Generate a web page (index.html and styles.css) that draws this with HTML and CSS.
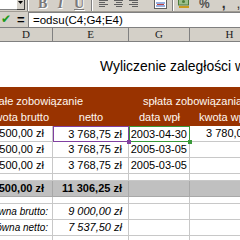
FILE: index.html
```html
<!DOCTYPE html>
<html>
<head>
<meta charset="utf-8">
<link rel="stylesheet" href="styles.css">
</head>
<body>
<div class="app">
  <div class="toolbar">
    <div class="combo"></div>
    <div class="dropbtn"><svg width="5" height="3" viewBox="0 0 5 3"><path d="M0 0h5L2.5 3z" fill="#000"/></svg></div>
    <div class="sep"></div>
    <div class="tb tb-b">B</div>
    <div class="tb tb-i">I</div>
    <div class="tb tb-u">U</div>
    <div class="sep sep2"></div>
    <div class="align"><i></i><i class="s"></i><i></i><i class="s"></i></div>
    <div class="align c"><i></i><i class="s"></i><i></i><i class="s"></i></div>
    <div class="align r"><i></i><i class="s"></i><i></i><i class="s"></i></div>
    <div class="merge"><svg width="13" height="9" viewBox="0 0 13 9"><rect x="0.5" y="-1" width="12" height="9.5" fill="#fff" stroke="#606060"/><path d="M2 3h9M2 6h9" stroke="#3060c0" stroke-width="1"/><path d="M3 4.5h7" stroke="#c04040"/></svg></div>
    <div class="sep sep3"></div>
    <div class="money"><svg width="12" height="9" viewBox="0 0 12 9"><rect x="0.5" y="-2" width="10" height="7" fill="#9cc08c" stroke="#4a7a3a"/><circle cx="5.5" cy="1.5" r="1.5" fill="#4a7a3a"/><path d="M1 7h10" stroke="#c89a20" stroke-width="2"/></svg></div>
    <div class="pct">%</div>
    <div class="comma">,</div>
    <div class="more">,</div>
  </div>
  <div class="formulabar">
    <div class="fb-left">
      <span class="check">✔</span>
      <span class="eq">=</span>
    </div>
    <div class="fb-input">=odsu(C4;G4;E4)</div>
  </div>
  <div class="colheads">
    <div class="ch cd">D</div>
    <div class="ch ce">E</div>
    <div class="ch cg">G</div>
    <div class="ch chh">H</div>
  </div>
  <div class="sheet">
    <div class="row r-blank1"></div>
    <div class="row r-title"><div class="title">Wyliczenie zaległości w</div></div>
    <div class="row r-blank2"></div>
    <div class="row r-h1 brown">
      <div class="c cd ra"><span>całe zobowiązanie</span></div>
      <div class="c ce"></div>
      <div class="c cg span">spłata zobowiązania</div>
    </div>
    <div class="row r-h2 brown">
      <div class="c cd ra pr4"><span>kwota brutto</span></div>
      <div class="c ce center">netto</div>
      <div class="c cg center">data wpł</div>
      <div class="c chh left2">kwota wpłaty</div>
    </div>
    <div class="row grid r-d">
      <div class="c cd ra num"><span>4 500,00 zł</span></div>
      <div class="c ce num sel-purple">3 768,75 zł<b class="handle hp"></b></div>
      <div class="c cg date sel-green">2003-04-30<b class="handle hg"></b></div>
      <div class="c chh num2">3 780,00 zł</div>
    </div>
    <div class="row grid r-d">
      <div class="c cd ra num"><span>4 500,00 zł</span></div>
      <div class="c ce num">3 768,75 zł</div>
      <div class="c cg date">2005-03-05</div>
      <div class="c chh"></div>
    </div>
    <div class="row grid r-d">
      <div class="c cd ra num"><span>4 500,00 zł</span></div>
      <div class="c ce num">3 768,75 zł</div>
      <div class="c cg date">2005-03-05</div>
      <div class="c chh"></div>
    </div>
    <div class="row grid r-blank3">
      <div class="c cd"></div><div class="c ce"></div><div class="c cg"></div><div class="c chh"></div>
    </div>
    <div class="row grid r-total">
      <div class="c cd ra num"><span>13 500,00 zł</span></div>
      <div class="c ce num">11 306,25 zł</div>
      <div class="c cg"></div>
      <div class="c chh"></div>
    </div>
    <div class="row grid r-blank4">
      <div class="c cd"></div><div class="c ce"></div><div class="c cg"></div><div class="c chh"></div>
    </div>
    <div class="row grid r-it">
      <div class="c cd ra lbl"><span>Kwota równa brutto:</span></div>
      <div class="c ce num">9 000,00 zł</div>
      <div class="c cg"></div>
      <div class="c chh"></div>
    </div>
    <div class="row grid r-it">
      <div class="c cd ra lbl"><span>Kwota równa netto:</span></div>
      <div class="c ce num">7 537,50 zł</div>
      <div class="c cg"></div>
      <div class="c chh"></div>
    </div>
    <div class="row grid r-it">
      <div class="c cd"></div><div class="c ce"></div><div class="c cg"></div><div class="c chh"></div>
    </div>
  </div>
</div>
</body>
</html>
```

FILE: styles.css
```css
html, body {
  margin: 0;
  padding: 0;
  background: #fff;
}
.app {
  width: 240px;
  height: 240px;
  overflow: hidden;
  font-family: "Liberation Sans", Arial, sans-serif;
}

/* toolbar */
.toolbar {
  height: 11px;
  background: #d4d0c8;
  display: flex;
  align-items: flex-start;
  overflow: hidden;
  border-bottom: 1px solid #a09c94;
}
.combo {
  width: 17px;
  height: 9px;
  background: #fff;
  border-bottom: 1px solid #808080;
  flex: none;
}
.dropbtn {
  width: 8px;
  background: #d4d0c8;
  border-right: 1px solid #404040;
  border-bottom: 1px solid #404040;
  display: flex;
  justify-content: center;
  align-items: flex-start;
  padding-top: 1px;
  box-sizing: border-box;
  height: 10px;
  flex: none;
}
.sep {
  width: 1px;
  height: 11px;
  background: #808080;
  border-right: 1px solid #fff;
  margin-left: 2px;
  flex: none;
}
.tb {
  font-family: "Liberation Serif", serif;
  font-weight: bold;
  font-size: 14px;
  line-height: 10px;
  margin-top: -1px;
  color: #7a7a7a;
  text-shadow: 1px 1px 0 #fff;
  width: 9px;
  text-align: center;
  flex: none;
}
.tb-b { margin-left: 9px; }
.tb-i { margin-left: 9px; font-style: italic; }
.tb-u { margin-left: 9px; text-decoration: underline; }
.sep2 { margin-left: 8px; }
.align {
  width: 9px;
  margin-left: 6px;
  display: flex;
  flex-direction: column;
  align-items: flex-start;
  gap: 1px;
  flex: none;
}
.align i {
  display: block;
  width: 9px;
  height: 1px;
  background: #606060;
}
.align i.s { width: 6px; }
.align.c { align-items: center; }
.align.r { align-items: flex-end; }
.merge { margin-left: 16px; flex: none; line-height: 0; }
.sep3 { margin-left: 5px; }
.money { margin-left: 4px; flex: none; line-height: 0; }
.pct {
  margin-left: 9px;
  font-size: 12px;
  line-height: 8px;
  color: #505050;
  font-weight: bold;
  flex: none;
}
.comma {
  margin-left: 12px;
  font-size: 14px;
  line-height: 6px;
  color: #303030;
  font-weight: bold;
  flex: none;
}
.more {
  margin-left: 11px;
  font-size: 14px;
  line-height: 6px;
  color: #303030;
  flex: none;
}

/* formula bar */
.formulabar {
  height: 15px;
  display: flex;
  background: #d4d0c8;
  border-bottom: 1px solid #808080;
}
.fb-left {
  width: 28px;
  display: flex;
  align-items: center;
  flex: none;
}
.check {
  color: #1a9a1a;
  font-size: 12px;
  line-height: 15px;
  margin-left: 1px;
  font-family: "DejaVu Sans", sans-serif;
}
.eq {
  font-size: 13px;
  font-weight: bold;
  margin-left: 6px;
  line-height: 15px;
}
.fb-input {
  flex: 1;
  background: #fff;
  border-top: 1px solid #808080;
  border-left: 1px solid #808080;
  font-size: 11.5px;
  line-height: 14px;
  padding-left: 4px;
  color: #000;
  white-space: nowrap;
}

/* column headers */
.colheads {
  height: 13px;
  display: flex;
  background: #d4d0c8;
  border-bottom: 1px solid #808080;
}
.ch {
  font-family: "Liberation Serif", serif;
  font-size: 11px;
  line-height: 13px;
  text-align: center;
  border-right: 1px solid #808080;
  box-sizing: border-box;
  color: #202020;
}
.cd { width: 53px; flex: none; }
.ce { width: 76px; flex: none; }
.cg { width: 61px; flex: none; }
.chh { width: 80px; flex: none; }

/* sheet */
.sheet {
  font-size: 11px;
}
.row {
  display: flex;
  white-space: nowrap;
}
.c {
  box-sizing: border-box;
  position: relative;
}
.ra {
  display: flex;
  justify-content: flex-end;
  overflow: hidden;
}
.ra span { flex: none; }
.r-blank1 { height: 13px; }
.r-title { height: 25px; }
.title {
  font-size: 13.9px;
  line-height: 16px;
  padding-top: 3px;
  padding-left: 100px;
  color: #000;
}
.r-blank2 { height: 7px; }
.brown {
  background: #993300;
  color: #fff8f0;
}
.r-h1 { height: 23px; align-items: flex-end; }
.r-h1 .c { line-height: 14px; padding-bottom: 2px; }
.r-h1 .cd { width: 83px; margin-right: -30px; }
.r-h2 { height: 16px; }
.r-h2 .c { line-height: 15px; }
.pr4 { padding-right: 4px; }
.span { padding-left: 14px; }
.center { text-align: center; }
.left2 { padding-left: 9px; }

.grid .c {
  border-right: 1px solid #c8c8c8;
  border-bottom: 1px solid #c8c8c8;
}
.r-d { height: 16px; }
.r-d .c { line-height: 15px; }
.num { text-align: right; padding-right: 6px; }
.cd.num { padding-right: 8px; }
.date { text-align: right; padding-right: 2px; }
.num2 { text-align: left; padding-left: 16px; }
.sel-purple {
  border: 1px solid #8040a0 !important;
}
.sel-green {
  border: 1px solid #3a9a3a !important;
}
.handle {
  position: absolute;
  width: 4px;
  height: 4px;
  right: -3px;
  bottom: -3px;
  z-index: 2;
}
.hp { background: #8040a0; }
.hg { background: #3a9a3a; }
.r-blank3 { height: 7px; }
.r-total { height: 16px; background: #c0c0c0; font-weight: bold; }
.r-total .c { line-height: 15px; border-color: #a8a8a8; }
.r-blank4 { height: 7px; }
.r-it { height: 16px; font-style: italic; }
.r-it .c { line-height: 15px; }
.lbl { padding-right: 4px; font-size: 10px; }
```
